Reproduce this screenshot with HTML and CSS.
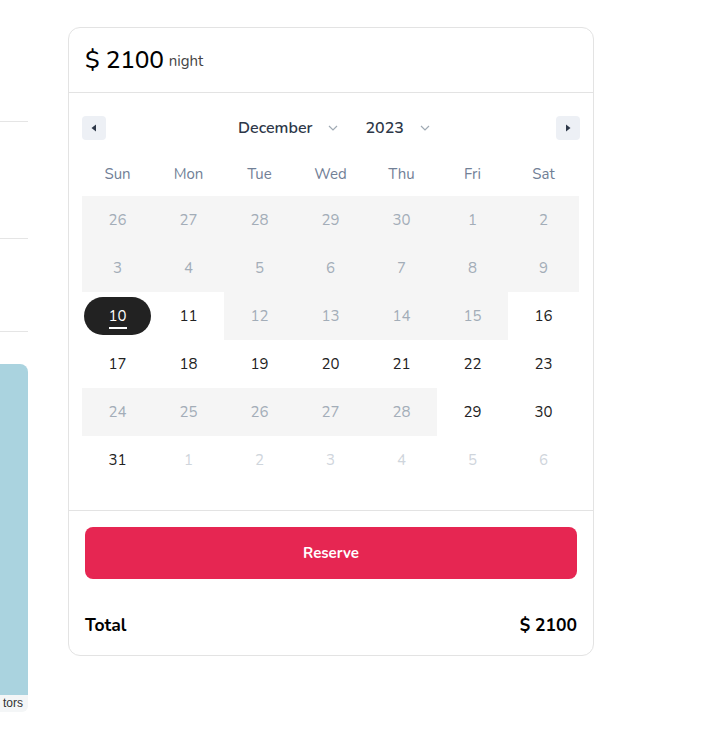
FILE: index.html
```html
<!DOCTYPE html>
<html>
<head>
<meta charset="utf-8">
<link rel="stylesheet" href="styles.css">
</head>
<body>
<div class="page">
  <div class="side">
    <div class="sp1"></div>
    <div class="line"></div>
    <div class="sp2"></div>
    <div class="line"></div>
    <div class="sp3"></div>
    <div class="line"></div>
    <div class="sp4"></div>
    <div class="map"></div>
    <div class="attr">tors</div>
  </div>
  <div class="card">
    <div class="head">
      <span class="price">$ 2100</span>
      <span class="night">night</span>
    </div>
    <div class="cal">
      <div class="nav">
        <div class="navbtn"><svg width="8" height="8" viewBox="0 0 8 8"><path d="M6 0.5 L1.5 4 L6 7.5 Z" fill="#2d3748"/></svg></div>
        <div class="selects">
          <div class="sel"><span>December</span><svg width="10" height="6" viewBox="0 0 10 6"><path d="M1 1 L5 5 L9 1" fill="none" stroke="#a0aab4" stroke-width="1.2"/></svg></div>
          <div class="sel"><span>2023</span><svg width="10" height="6" viewBox="0 0 10 6"><path d="M1 1 L5 5 L9 1" fill="none" stroke="#a0aab4" stroke-width="1.2"/></svg></div>
        </div>
        <div class="navbtn"><svg width="8" height="8" viewBox="0 0 8 8"><path d="M2 0.5 L6.5 4 L2 7.5 Z" fill="#2d3748"/></svg></div>
      </div>
      <div class="grid">
        <div class="wd">Sun</div><div class="wd">Mon</div><div class="wd">Tue</div><div class="wd">Wed</div><div class="wd">Thu</div><div class="wd">Fri</div><div class="wd">Sat</div>

        <div class="d dis">26</div><div class="d dis">27</div><div class="d dis">28</div><div class="d dis">29</div><div class="d dis">30</div><div class="d dis">1</div><div class="d dis">2</div>
        <div class="d dis">3</div><div class="d dis">4</div><div class="d dis">5</div><div class="d dis">6</div><div class="d dis">7</div><div class="d dis">8</div><div class="d dis">9</div>
        <div class="d"><span class="today">10</span></div><div class="d">11</div><div class="d dis">12</div><div class="d dis">13</div><div class="d dis">14</div><div class="d dis">15</div><div class="d">16</div>
        <div class="d">17</div><div class="d">18</div><div class="d">19</div><div class="d">20</div><div class="d">21</div><div class="d">22</div><div class="d">23</div>
        <div class="d dis">24</div><div class="d dis">25</div><div class="d dis">26</div><div class="d dis">27</div><div class="d dis">28</div><div class="d">29</div><div class="d">30</div>
        <div class="d">31</div><div class="d next">1</div><div class="d next">2</div><div class="d next">3</div><div class="d next">4</div><div class="d next">5</div><div class="d next">6</div>
      </div>
    </div>
    <div class="foot">
      <button class="reserve">Reserve</button>
      <div class="total"><span>Total</span><span>$ 2100</span></div>
    </div>
  </div>
</div>
</body>
</html>
```

FILE: styles.css
```css
* { box-sizing: border-box; }
body {
  margin: 0;
  background: #fff;
  font-family: "Nunito", "Open Sans", sans-serif;
  color: #000;
}
.page {
  display: flex;
  align-items: flex-start;
  gap: 40px;
}
.side {
  width: 28px;
  display: flex;
  flex-direction: column;
}
.sp1 { height: 121px; }
.sp2 { height: 116px; }
.sp3 { height: 92px; }
.sp4 { height: 32px; }
.line { height: 1px; background: #e5e5e5; }
.map {
  height: 331px;
  background: #aad3df;
  border-top-right-radius: 8px;
}
.attr {
  height: 17px;
  background: #f4f6f7;
  border-bottom-right-radius: 6px;
  font-family: "Liberation Sans", Arial, sans-serif;
  font-size: 12px;
  line-height: 17px;
  color: #333;
  white-space: nowrap;
  text-align: right;
  padding-right: 5px;
}
.card {
  margin-top: 27px;
  width: 526px;
  border: 1px solid #e3e3e3;
  border-radius: 12px;
  overflow: hidden;
}
.head {
  height: 65px;
  padding: 0 16px;
  display: flex;
  align-items: center;
  gap: 5px;
  border-bottom: 1px solid #e3e3e3;
}
.price { font-size: 24.5px; font-weight: 500; letter-spacing: -0.2px; }
.night { font-size: 15px; color: #444; margin-top: 1px; }
.cal {
  padding: 23px 13px 26px 13px;
  border-bottom: 1px solid #e3e3e3;
}
.nav {
  display: flex;
  align-items: center;
  justify-content: space-between;
  height: 24px;
}
.navbtn {
  width: 24px;
  height: 24px;
  border-radius: 4px;
  background: #edf0f5;
  display: flex;
  align-items: center;
  justify-content: center;
}
.selects {
  display: flex;
  gap: 27px;
  margin-left: 6px;
}
.sel {
  display: flex;
  align-items: center;
  gap: 16px;
  font-size: 16px;
  font-weight: 600;
  color: #2d3748;
}
.grid {
  margin-top: 10px;
  display: grid;
  grid-template-columns: repeat(7, 71px);
}
.wd {
  height: 46px;
  padding-top: 2px;
  display: flex;
  align-items: center;
  justify-content: center;
  font-size: 15px;
  color: #718096;
}
.d {
  height: 48px;
  display: flex;
  align-items: center;
  justify-content: center;
  font-size: 15px;
  color: #222;
}
.d.dis { background: #f5f5f5; color: #a3adb8; }
.d.next { color: #cfd5dc; }
.today {
  width: 67px;
  height: 38px;
  border-radius: 19px;
  background: #222;
  color: #fff;
  display: flex;
  align-items: center;
  justify-content: center;
  position: relative;
}
.today::after {
  content: "";
  position: absolute;
  left: 25px;
  right: 24px;
  bottom: 6px;
  height: 2px;
  background: #fff;
}
.foot {
  padding: 16px 16px 0 16px;
}
.reserve {
  width: 100%;
  height: 52px;
  border: 0;
  border-radius: 8px;
  background: #e62652;
  color: #fff;
  font-family: inherit;
  font-size: 15px;
  font-weight: 700;
}
.total {
  height: 76px;
  padding-top: 16px;
  display: flex;
  align-items: center;
  justify-content: space-between;
  font-size: 17.5px;
  font-weight: 700;
}
```
